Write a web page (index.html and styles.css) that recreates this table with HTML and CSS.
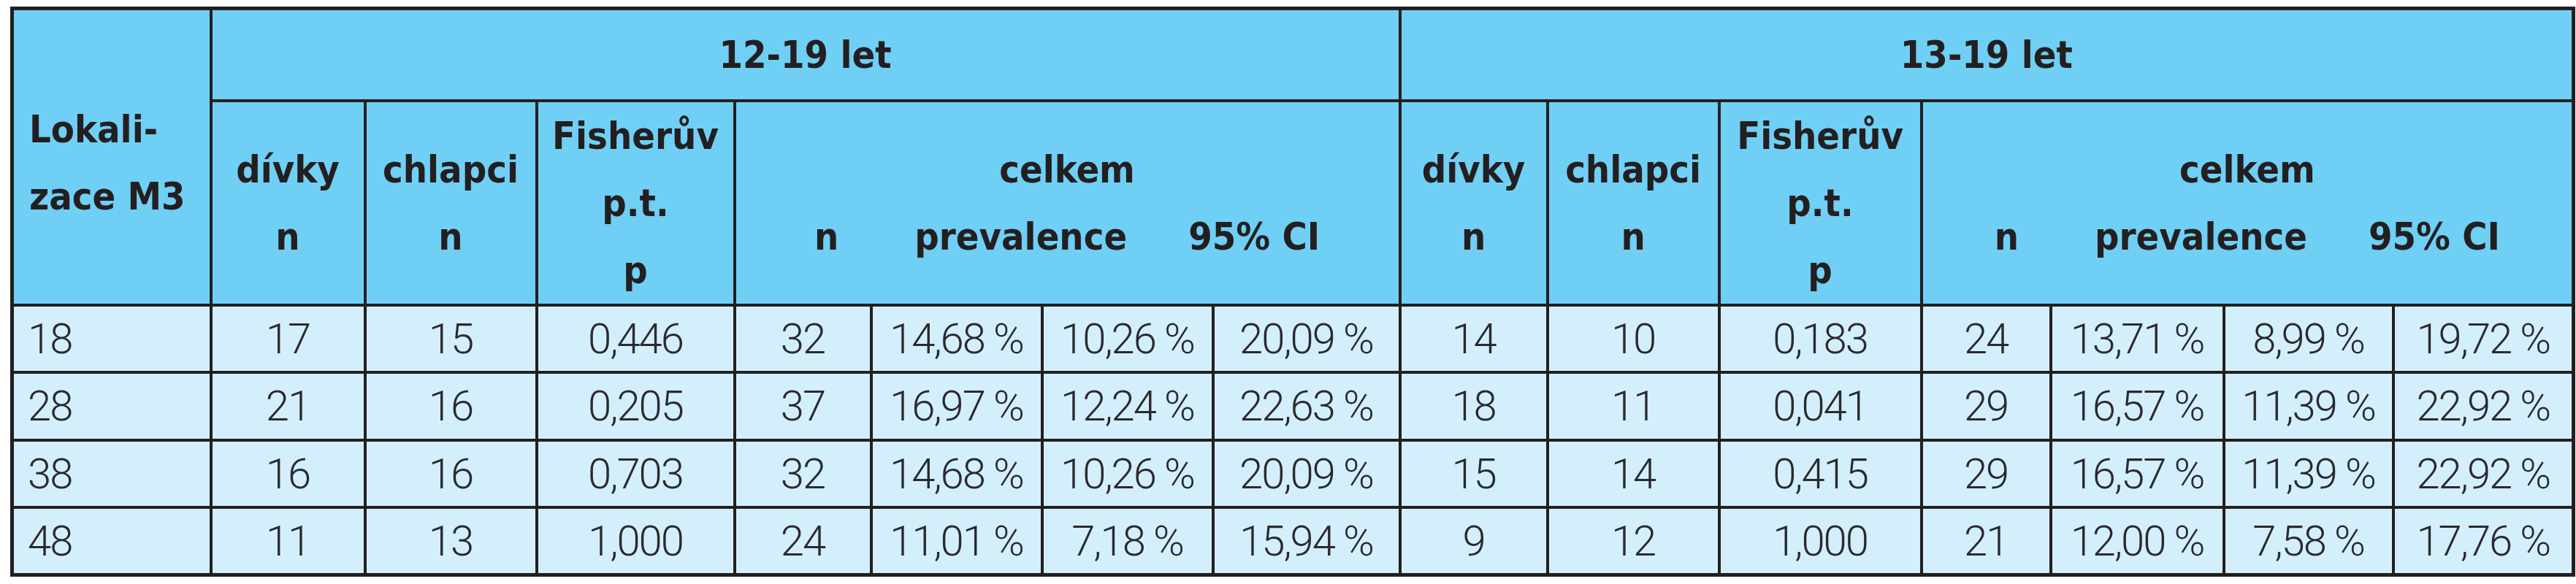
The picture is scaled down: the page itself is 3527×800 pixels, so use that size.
FILE: index.html
```html
<!DOCTYPE html>
<html lang="cs">
<head>
<meta charset="utf-8">
<title>Lokalizace M3</title>
<link rel="stylesheet" href="styles.css">
</head>
<body>
<table class="data-table">
  <colgroup>
    <col class="c-lok">
    <col class="c-divky">
    <col class="c-chlapci">
    <col class="c-fisher">
    <col class="c-n">
    <col class="c-prev">
    <col class="c-ci">
    <col class="c-ci2">
    <col class="c-divky2">
    <col class="c-chlapci">
    <col class="c-fisher2">
    <col class="c-n2">
    <col class="c-prev2">
    <col class="c-ci3">
    <col class="c-ci4">
  </colgroup>
  <thead>
    <tr class="head-row1">
      <th rowspan="2" class="lok-head"><span class="lok-text">Lokali-<br>zace M3</span></th>
      <th colspan="7">12-19 let</th>
      <th colspan="7">13-19 let</th>
    </tr>
    <tr class="head-row2">
      <th>dívky<br>n</th>
      <th>chlapci<br>n</th>
      <th>Fisherův<br>p.t.<br>p</th>
      <th colspan="4">celkem<br><span class="sub">n</span><span class="sub gap1">prevalence</span><span class="sub gap2">95% CI</span></th>
      <th>dívky<br>n</th>
      <th>chlapci<br>n</th>
      <th>Fisherův<br>p.t.<br>p</th>
      <th colspan="4">celkem<br><span class="sub">n</span><span class="sub gap1">prevalence</span><span class="sub gap2">95% CI</span></th>
    </tr>
  </thead>
  <tbody>
    <tr>
      <td class="first">18</td><td>17</td><td>15</td><td>0,446</td><td>32</td><td>14,68 %</td><td>10,26 %</td><td>20,09 %</td>
      <td>14</td><td>10</td><td>0,183</td><td>24</td><td>13,71 %</td><td>8,99 %</td><td>19,72 %</td>
    </tr>
    <tr>
      <td class="first">28</td><td>21</td><td>16</td><td>0,205</td><td>37</td><td>16,97 %</td><td>12,24 %</td><td>22,63 %</td>
      <td>18</td><td>11</td><td>0,041</td><td>29</td><td>16,57 %</td><td>11,39 %</td><td>22,92 %</td>
    </tr>
    <tr>
      <td class="first">38</td><td>16</td><td>16</td><td>0,703</td><td>32</td><td>14,68 %</td><td>10,26 %</td><td>20,09 %</td>
      <td>15</td><td>14</td><td>0,415</td><td>29</td><td>16,57 %</td><td>11,39 %</td><td>22,92 %</td>
    </tr>
    <tr>
      <td class="first">48</td><td>11</td><td>13</td><td>1,000</td><td>24</td><td>11,01 %</td><td>7,18 %</td><td>15,94 %</td>
      <td>9</td><td>12</td><td>1,000</td><td>21</td><td>12,00 %</td><td>7,58 %</td><td>17,76 %</td>
    </tr>
  </tbody>
</table>
</body>
</html>
```

FILE: styles.css
```css
html, body {
  margin: 0;
  padding: 0;
  background: #ffffff;
}

body {
  padding: 9px 0 0 14px;
}

.data-table {
  border-collapse: collapse;
  table-layout: fixed;
  width: 3510px;
  border: 5px solid #231f20;
  color: #231f20;
}

.c-lok { width: 272px; }
.c-divky { width: 211px; }
.c-chlapci { width: 235px; }
.c-fisher { width: 271px; }
.c-n { width: 187px; }
.c-prev { width: 234px; }
.c-ci { width: 234px; }
.c-ci2 { width: 256px; }
.c-divky2 { width: 202px; }
.c-fisher2 { width: 277px; }
.c-n2 { width: 177px; }
.c-prev2 { width: 237px; }
.c-ci3 { width: 232px; }
.c-ci4 { width: 247px; }

.data-table th,
.data-table td {
  border: 4px solid #231f20;
  padding: 0;
  overflow: hidden;
  white-space: nowrap;
}

.data-table th {
  background: #70cff5;
  font-family: "DejaVu Sans Condensed", "DejaVu Sans", sans-serif;
  font-stretch: condensed;
  font-weight: bold;
  font-size: 52px;
  line-height: 92px;
  text-align: center;
  vertical-align: middle;
}

.head-row1 { height: 126px; }
.head-row2 { height: 276px; }

.lok-head {
  text-align: left !important;
  padding-left: 21px !important;
}

.lok-text {
  display: inline-block;
  padding-top: 16px;
}

.sub {
  display: inline-block;
}

.gap1 { margin-left: 104px; }
.gap2 { margin-left: 84px; }

.data-table tbody tr {
  height: 92.5px;
}

.data-table td {
  background: #d4effc;
  font-family: Roboto, "Liberation Sans", sans-serif;
  font-weight: 300;
  font-size: 58px;
  letter-spacing: -2px;
  line-height: 60px;
  text-align: center;
  vertical-align: middle;
  color: #2a2a2e;
}

.data-table td.first {
  text-align: left;
  padding-left: 19px;
}
```
